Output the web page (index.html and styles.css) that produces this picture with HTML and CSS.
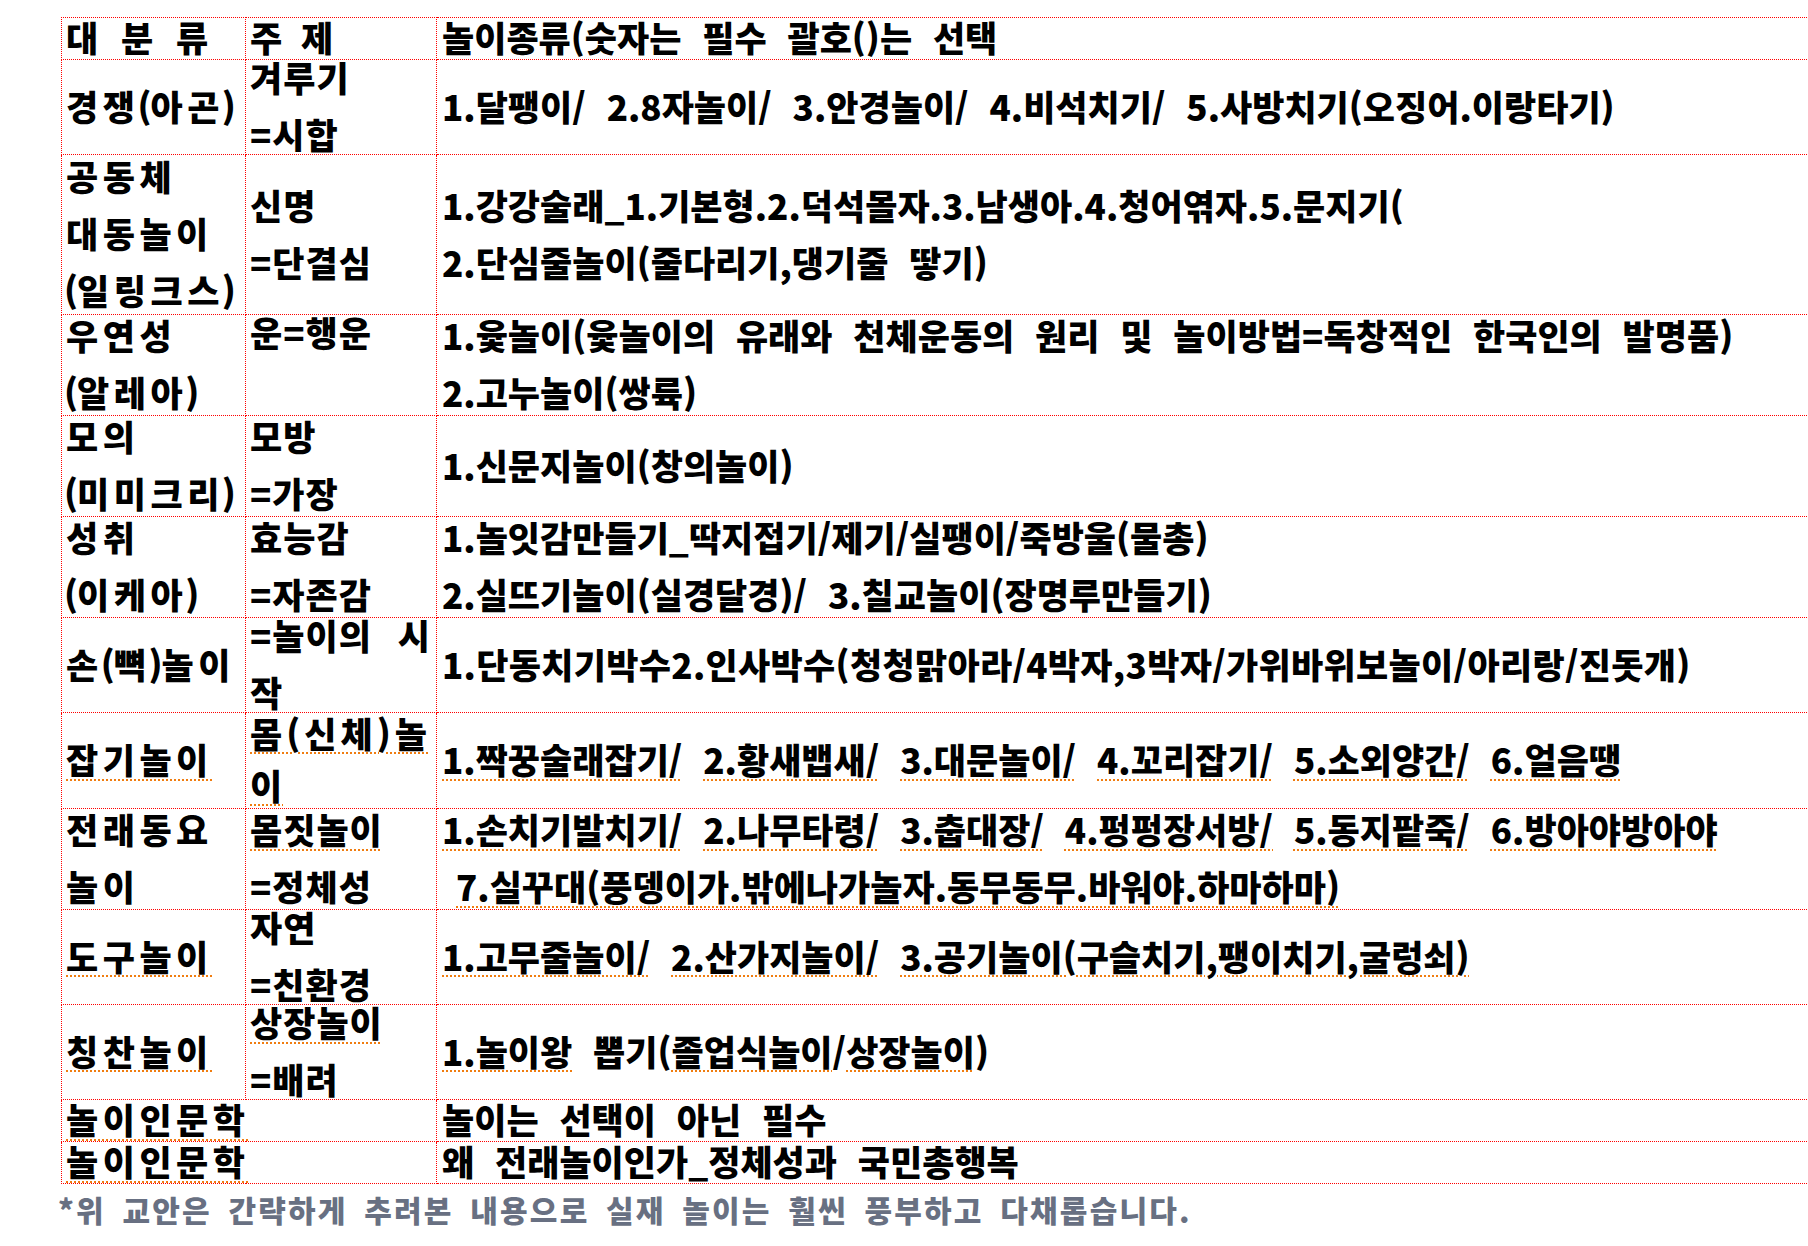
FILE: index.html
```html
<!DOCTYPE html>
<html lang="ko">
<head>
<meta charset="utf-8">
<title>전래놀이 교안</title>
<link rel="stylesheet" href="styles.css">
</head>
<body>
<div class="page">
  <table class="plan">
    <colgroup><col class="c1"><col class="c2"><col class="c3"></colgroup>
    <tr class="r-head">
      <td class="cat"><div class="t">대 분 류</div></td>
      <td><div class="t">주 제</div></td>
      <td class="wide"><div class="t">놀이종류(숫자는 필수 괄호()는 선택</div></td>
    </tr>
    <tr class="r1">
      <td class="cat"><div class="t">경쟁<span class="pn">(</span>아곤<span class="pn">)</span></div></td>
      <td><div class="t">겨루기<br>=시합</div></td>
      <td class="wide"><div class="t">1.달팽이/ 2.8자놀이/ 3.안경놀이/ 4.비석치기/ 5.사방치기(오징어.이랑타기)</div></td>
    </tr>
    <tr class="r2">
      <td class="cat"><div class="t">공동체<br>대동놀이<br><span class="pn">(</span>일링크스<span class="pn">)</span></div></td>
      <td><div class="t">신명<br>=단결심</div></td>
      <td class="wide"><div class="t">1.강강술래_1.기본형.2.덕석몰자.3.남생아.4.청어엮자.5.문지기(<br>2.단심줄놀이(줄다리기,댕기줄 땋기)</div></td>
    </tr>
    <tr class="r3">
      <td class="cat"><div class="t">우연성<br><span class="pn">(</span>알레아<span class="pn">)</span></div></td>
      <td class="top"><div class="t">운=행운</div></td>
      <td class="wide"><div class="t">1.윷놀이(윷놀이의 유래와 천체운동의 원리 및 놀이방법=독창적인 한국인의 발명품)<br>2.고누놀이(쌍륙)</div></td>
    </tr>
    <tr class="r4">
      <td class="cat"><div class="t">모의<br><span class="pn">(</span>미미크리<span class="pn">)</span></div></td>
      <td><div class="t">모방<br>=가장</div></td>
      <td class="wide"><div class="t">1.신문지놀이(창의놀이)</div></td>
    </tr>
    <tr class="r5">
      <td class="cat"><div class="t">성취<br><span class="pn">(</span>이케아<span class="pn">)</span></div></td>
      <td><div class="t">효능감<br>=자존감</div></td>
      <td class="wide"><div class="t">1.놀잇감만들기_딱지접기/제기/실팽이/죽방울(물총)<br>2.실뜨기놀이(실경달경)/ 3.칠교놀이(장명루만들기)</div></td>
    </tr>
    <tr class="r6">
      <td class="cat"><div class="t">손<span class="pn">(</span>뼉<span class="pn">)</span>놀이</div></td>
      <td><div class="t"><span class="spread"><span>=놀이의</span><span>시</span></span>작</div></td>
      <td class="wide"><div class="t loose">1.단동치기박수2.인사박수(청청맑아라/4박자,3박자/가위바위보놀이/아리랑/진돗개)</div></td>
    </tr>
    <tr class="r7">
      <td class="cat"><div class="t"><span class="u">잡기놀이</span></div></td>
      <td><div class="t tight"><span class="u spaced">몸(신체)놀</span><br><span class="u">이</span></div></td>
      <td class="wide"><div class="t"><span class="u">1.짝꿍술래잡기/</span> <span class="u">2.황새뱁새/</span> <span class="u">3.대문놀이/</span> <span class="u">4.꼬리잡기/</span> <span class="u">5.소외양간/</span> <span class="u">6.얼음땡</span></div></td>
    </tr>
    <tr class="r8">
      <td class="cat"><div class="t">전래동요<br>놀이</div></td>
      <td><div class="t"><span class="u">몸짓놀이</span><br>=정체성</div></td>
      <td class="wide"><div class="t"><span class="u">1.손치기발치기/</span> <span class="u">2.나무타령/</span> <span class="u">3.춥대장/</span> <span class="u">4.펑펑장서방/</span> <span class="u">5.동지팥죽/</span> <span class="u">6.방아야방아야</span><br><span class="indent"></span><span class="u">7.실꾸대(풍뎅이가.밖에나가놀자.동무동무.바워야.하마하마)</span></div></td>
    </tr>
    <tr class="r9">
      <td class="cat"><div class="t"><span class="u">도구놀이</span></div></td>
      <td><div class="t">자연<br>=친환경</div></td>
      <td class="wide"><div class="t"><span class="u">1.고무줄놀이/</span> <span class="u">2.산가지놀이/</span> <span class="u">3.공기놀이(구슬치기,팽이치기,굴렁쇠)</span></div></td>
    </tr>
    <tr class="r10">
      <td class="cat"><div class="t"><span class="u">칭찬놀이</span></div></td>
      <td><div class="t"><span class="u">상장놀이</span><br>=배려</div></td>
      <td class="wide"><div class="t"><span class="u">1.놀이왕</span> 뽑기(<span class="u">졸업식놀이</span>/<span class="u">상장놀이</span>)</div></td>
    </tr>
    <tr class="r11">
      <td class="cat" colspan="2"><div class="t"><span class="u">놀이인문학</span></div></td>
      <td class="wide"><div class="t">놀이는 선택이 아닌 필수</div></td>
    </tr>
    <tr class="r12">
      <td class="cat" colspan="2"><div class="t"><span class="u">놀이인문학</span></div></td>
      <td class="wide"><div class="t">왜 전래놀이인가_정체성과 국민총행복</div></td>
    </tr>
  </table>
  <p class="note">*위 교안은 간략하게 추려본 내용으로 실재 놀이는 훨씬 풍부하고 다채롭습니다.</p>
</div>
</body>
</html>
```

FILE: styles.css
```css
html, body {
  margin: 0;
  padding: 0;
  background: #ffffff;
  overflow: hidden;
}

body {
  font-family: "Noto Sans CJK KR", "Noto Sans", sans-serif;
  font-weight: 900;
  color: #000000;
}

.page {
  padding: 17px 0 0 61px;
  width: 1800px;
}

.plan {
  border-collapse: collapse;
  table-layout: fixed;
  width: 1770px;
}

.plan col.c1 { width: 184px; }
.plan col.c2 { width: 191px; }

.plan td {
  border: 1px dotted #ff0000;
  padding: 0 3px 0 4px;
  vertical-align: middle;
  font-size: 35px;
  letter-spacing: 1px;
  word-spacing: 7px;
}

.plan td.cat {
  letter-spacing: 4.5px;
  word-spacing: 4px;
}

.plan td.cat .pn {
  letter-spacing: -1px;
  margin-left: -2px;
}

.plan td.wide {
  padding-left: 5px;
  white-space: nowrap;
  letter-spacing: 0;
  word-spacing: 11px;
}

.plan td.top {
  vertical-align: top;
}

.t {
  line-height: 57px;
  margin: -12px 0 -8px;
  white-space: nowrap;
}

.t.loose {
  letter-spacing: 0.3px;
}

.t.tight {
  line-height: 52px;
  margin: -10px 0 -6px;
}

.spread {
  display: flex;
  justify-content: space-between;
  padding-right: 2px;
}

.spaced {
  letter-spacing: 4px;
}

.indent {
  display: inline-block;
  width: 14px;
}

.u {
  text-decoration-line: underline;
  text-decoration-style: dotted;
  text-decoration-color: #f07d10;
  text-decoration-thickness: 2px;
  text-underline-offset: 5px;
}

.r-head { height: 42px; }
.r1 { height: 95px; }
.r2 { height: 160px; }
.r3 { height: 101px; }
.r4 { height: 101px; }
.r5 { height: 101px; }
.r6 { height: 95px; }
.r7 { height: 96px; }
.r8 { height: 101px; }
.r9 { height: 94px; }
.r10 { height: 94px; }
.r11 { height: 42px; }
.r12 { height: 42px; }

.note {
  margin: 5px 0 0 -3px;
  font-size: 30px;
  line-height: 40px;
  letter-spacing: 2.2px;
  word-spacing: 6px;
  color: #687082;
}
```
